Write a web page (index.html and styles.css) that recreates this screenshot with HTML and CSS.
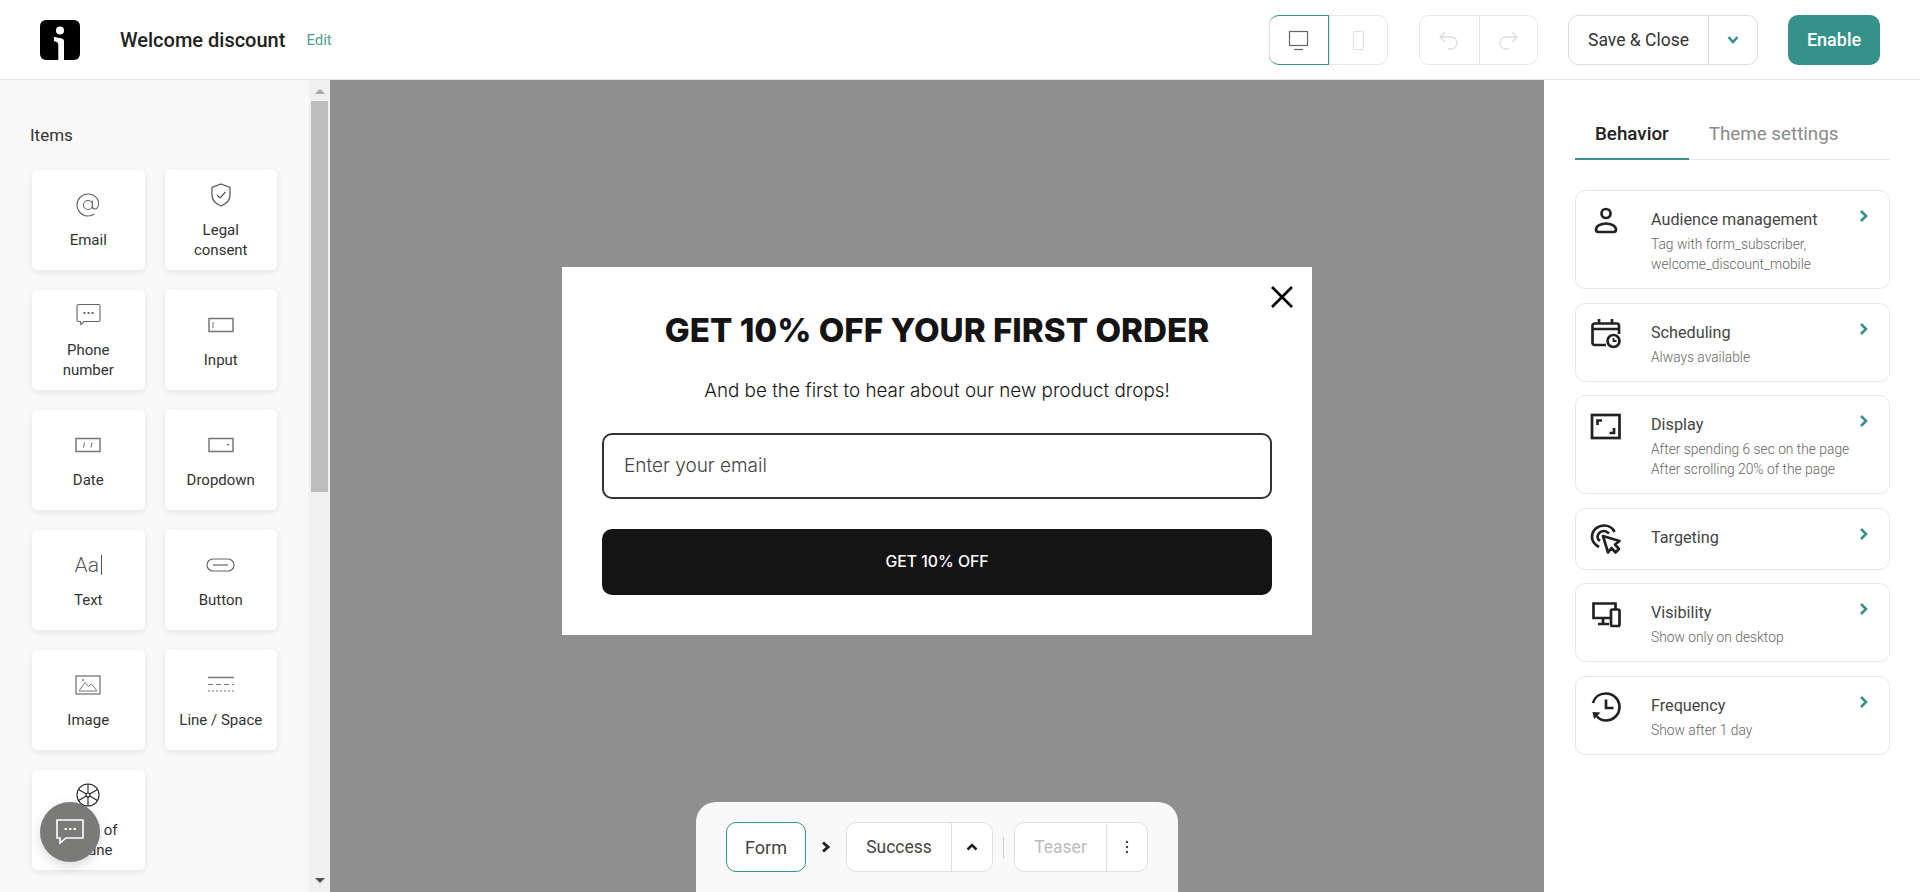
FILE: index.html
```html
<!DOCTYPE html>
<html>
    <head>
        <meta charset="utf-8">
        <title>Welcome discount</title>
        <link rel="stylesheet" href="styles.css">
    </head>
    <body>
        <header class="topbar">
            <svg class="logo" width="40" height="40" viewBox="0 0 40 40">
                <rect width="40" height="40" rx="6" fill="#000"/>
                <circle cx="20" cy="10.5" r="4" fill="#fff"/>
                <path d="M14 17C19 18 24 18 24 21V40H18.3V25C18.3 22.5 16.5 21.5 14 21.3Z" fill="#fff"/>
            </svg>
            <div class="form-title">Welcome discount</div>
            <a class="edit-link">Edit</a>
            <div class="topbar-actions">
                <div class="btn-group btn-group-device">
                    <div class="btn-cell btn-cell-active">
                        <svg width="24" height="24" viewBox="0 0 24 24" fill="none" stroke="#666" stroke-width="1.2"><rect x="3.5" y="3.5" width="18" height="14"/><path d="M8 21.5H17"/></svg>
                    </div>
                    <div class="btn-cell">
                        <svg width="24" height="24" viewBox="0 0 24 24" fill="none" stroke="#e2e2e2" stroke-width="1.2"><rect x="7.5" y="3.5" width="10" height="18" rx="1"/></svg>
                    </div>
                </div>
                <div class="btn-group btn-group-history">
                    <div class="btn-cell">
                        <svg width="24" height="24" viewBox="0 0 24 24" fill="none" stroke="#ddd" stroke-width="1.3"><path d="M8 4L3 9L8 14M3 9H14C18 9 20 12 20 15C20 18 18 21 14 21H11"/></svg>
                    </div>
                    <div class="btn-cell">
                        <svg width="24" height="24" viewBox="0 0 24 24" fill="none" stroke="#ddd" stroke-width="1.3"><path d="M16 4L21 9L16 14M21 9H10C6 9 4 12 4 15C4 18 6 21 10 21H13"/></svg>
                    </div>
                </div>
                <div class="btn-group btn-group-save">
                    <div class="btn-cell btn-cell-save">Save &amp; Close</div>
                    <div class="btn-cell btn-cell-caret">
                        <svg width="12" height="10" viewBox="0 0 12 10" fill="none" stroke="#35918a" stroke-width="2.6"><path d="M1.5 2L6 7L10.5 2"/></svg>
                    </div>
                </div>
                <div class="btn-enable">Enable</div>
            </div>
        </header>

        <div class="workspace">
            <aside class="sidebar">
                <div class="sidebar-content">
                    <div class="sidebar-title">Items</div>
                    <div class="items-grid">
                        <div class="item">
                            <svg width="30" height="30" viewBox="0 0 30 30" fill="none" stroke="#666" stroke-width="1.1"><circle cx="15" cy="15" r="4.5"/><path d="M19.5 10.5V17C19.5 19.5 23.5 20 25 16.5C27 11 23 4 15 4C9 4 4 9 4 15C4 21 9 26 15 26C18 26 20 25 21.5 24"/></svg>
                            <div class="item-label">Email</div>
                        </div>
                        <div class="item">
                            <svg width="30" height="30" viewBox="0 0 30 30" fill="none" stroke="#555" stroke-width="1.2"><path d="M15 4L24 7.5V15C24 20 20 24 15 26C10 24 6 20 6 15V7.5Z"/><path d="M11 15L14 18L19.5 12"/></svg>
                            <div class="item-label">Legal<br>consent</div>
                        </div>
                        <div class="item">
                            <svg width="30" height="30" viewBox="0 0 30 30" fill="none" stroke="#666" stroke-width="1.1"><path d="M5.5 4.5H25.5C26.5 4.5 27 5 27 6V20C27 21 26.500 21.500 25.500 21.500H11L8 24.500L7.500 21.500H5.500C4.500 21.500 4 21 4 20V6C4 5 4.500 4.500 5.500 4.500Z"/><path d="M10.500 13H12.500M14.500 13H16.500M18.500 13H20.500" stroke-width="1.800"/></svg>
                            <div class="item-label">Phone<br>number</div>
                        </div>
                        <div class="item">
                            <svg width="30" height="30" viewBox="0 0 30 30" fill="none" stroke="#777" stroke-width="1.500"><rect x="3" y="8.500" width="24" height="13"/><path d="M7 12V18" stroke-width="1"/></svg>
                            <div class="item-label">Input</div>
                        </div>
                        <div class="item">
                            <svg width="30" height="30" viewBox="0 0 30 30" fill="none" stroke="#777" stroke-width="1.500"><rect x="3" y="8.500" width="24" height="13"/><path d="M11.500 12.500L10.500 17.500M19 12.500L18 17.500" stroke-width="1.100"/></svg>
                            <div class="item-label">Date</div>
                        </div>
                        <div class="item">
                            <svg width="30" height="30" viewBox="0 0 30 30" fill="none" stroke="#777" stroke-width="1.500"><rect x="3" y="8.500" width="24" height="13"/><path d="M20.500 14H23.500L22 16Z" fill="#777" stroke="none"/></svg>
                            <div class="item-label">Dropdown</div>
                        </div>
                        <div class="item">
                            <div class="item-text-icon">Aa<span class="item-text-caret"></span></div>
                            <div class="item-label">Text</div>
                        </div>
                        <div class="item">
                            <svg width="30" height="30" viewBox="0 0 30 30" fill="none" stroke="#666" stroke-width="1.200"><rect x="1" y="9" width="27" height="12" rx="6"/><path d="M7 15H22"/></svg>
                            <div class="item-label">Button</div>
                        </div>
                        <div class="item">
                            <svg width="30" height="30" viewBox="0 0 30 30" fill="none" stroke="#777" stroke-width="1.300"><rect x="3" y="6" width="24" height="18"/><path d="M6 21L12 12.500L15.500 16.500L18.500 14L24 21Z" stroke-width="1"/><circle cx="10" cy="10" r="1" fill="#777" stroke="none"/></svg>
                            <div class="item-label">Image</div>
                        </div>
                        <div class="item">
                            <svg width="30" height="30" viewBox="0 0 30 30" fill="none" stroke="#777"><path d="M2 7.500H28" stroke-width="1.500"/><path d="M2 14.500H28" stroke-width="1" stroke-dasharray="5 3"/><path d="M2 21H28" stroke-width="1" stroke-dasharray="2 2"/></svg>
                            <div class="item-label">Line / Space</div>
                        </div>
                        <div class="item">
                            <svg width="30" height="30" viewBox="0 0 30 30" fill="none" stroke="#222" stroke-width="1.100"><circle cx="15" cy="15" r="11"/><circle cx="15" cy="15" r="2"/><path d="M15 4V13M15 17V26M5.500 9.500L13.300 14M16.700 16L24.500 20.500M24.500 9.500L16.700 14M13.300 16L5.500 20.500"/></svg>
                            <div class="item-label">Wheel of<br>fortune</div>
                        </div>
                    </div>
                </div>
                <div class="scrollbar">
                    <div class="scroll-arrow-up"></div>
                    <div class="scroll-thumb"></div>
                    <div class="scroll-arrow-down"></div>
                </div>
            </aside>

            <main class="canvas">
                <div class="popup">
                    <svg class="popup-close" width="22" height="22" viewBox="0 0 22 22" fill="none" stroke="#000" stroke-width="2.600"><path d="M1 1L21 21M21 1L1 21"/></svg>
                    <h1 class="popup-title">GET 10% OFF YOUR FIRST ORDER</h1>
                    <p class="popup-text">And be the first to hear about our new product drops!</p>
                    <div class="popup-input">Enter your email</div>
                    <div class="popup-button">GET 10% OFF</div>
                </div>
                <div class="steps">
                    <div class="step-btn step-btn-active">Form</div>
                    <svg class="step-arrow" width="10" height="12" viewBox="0 0 10 12" fill="none" stroke="#222" stroke-width="3"><path d="M2 1.500L7 6L2 10.500"/></svg>
                    <div class="step-group">
                        <div class="step-name step-name-success">Success</div>
                        <div class="step-side">
                            <svg width="12" height="10" viewBox="0 0 12 10" fill="none" stroke="#222" stroke-width="2.600"><path d="M1.500 7.500L6 3L10.500 7.500"/></svg>
                        </div>
                    </div>
                    <div class="step-divider"></div>
                    <div class="step-group">
                        <div class="step-name step-name-teaser">Teaser</div>
                        <div class="step-side">
                            <svg width="4" height="14" viewBox="0 0 4 14" fill="#444"><circle cx="2" cy="2" r="1.200"/><circle cx="2" cy="7" r="1.200"/><circle cx="2" cy="12" r="1.200"/></svg>
                        </div>
                    </div>
                </div>
            </main>

            <aside class="settings">
                <div class="tabs">
                    <div class="tab tab-active">Behavior</div>
                    <div class="tab">Theme settings</div>
                </div>
                <div class="setting-list">
                    <div class="setting">
                        <svg class="setting-icon" width="32" height="32" viewBox="0 0 32 32" fill="none" stroke="#222" stroke-width="2.700"><circle cx="16" cy="8.500" r="4.500"/><path d="M8.500 27H23.500C25 27 26 26 26 24.500C26 21 21 18.500 16 18.500C11 18.500 6 21 6 24.500C6 26 7 27 8.500 27Z"/></svg>
                        <div class="setting-body">
                            <div class="setting-name">Audience management</div>
                            <div class="setting-desc">Tag with form_subscriber,<br>welcome_discount_mobile</div>
                        </div>
                        <svg class="setting-chevron" width="10" height="14" viewBox="0 0 10 14" fill="none" stroke="#35918a" stroke-width="2.600"><path d="M2 2L7 7L2 12"/></svg>
                    </div>
                    <div class="setting">
                        <svg class="setting-icon" width="32" height="32" viewBox="0 0 32 32" fill="none" stroke="#222" stroke-width="2.700"><path d="M16 27H4.500C3.500 27 2.500 26 2.500 25V7.500C2.500 6.500 3.500 5.500 4.500 5.500H27C28 5.500 29 6.500 29 7.500V16"/><path d="M2.500 11H29M9 1V6M22 1V6"/><circle cx="23.500" cy="23" r="6"/><path d="M23.500 20V23H26.500" stroke-width="1.800"/></svg>
                        <div class="setting-body">
                            <div class="setting-name">Scheduling</div>
                            <div class="setting-desc">Always available</div>
                        </div>
                        <svg class="setting-chevron" width="10" height="14" viewBox="0 0 10 14" fill="none" stroke="#35918a" stroke-width="2.600"><path d="M2 2L7 7L2 12"/></svg>
                    </div>
                    <div class="setting">
                        <svg class="setting-icon" width="32" height="32" viewBox="0 0 32 32" fill="none" stroke="#222" stroke-width="2.700"><rect x="2" y="5" width="27.500" height="23"/><path d="M7.500 15V10.500H12M24 18V23H19.500"/></svg>
                        <div class="setting-body">
                            <div class="setting-name">Display</div>
                            <div class="setting-desc">After spending 6 sec on the page<br>After scrolling 20% of the page</div>
                        </div>
                        <svg class="setting-chevron" width="10" height="14" viewBox="0 0 10 14" fill="none" stroke="#35918a" stroke-width="2.600"><path d="M2 2L7 7L2 12"/></svg>
                    </div>
                    <div class="setting setting-single">
                        <svg class="setting-icon" width="32" height="32" viewBox="0 0 32 32" fill="none" stroke="#222" stroke-width="2.700"><path d="M9 24C4.500 21.500 2 17.500 2 14C2 7.500 7.500 2.500 14 2.500C19 2.500 23 5.500 24.500 9"/><path d="M10 18C8 16.500 7.500 15 7.500 14C7.500 10.500 10.500 8 14 8C16 8 17.500 9 19 10.500"/><path d="M13 13L29.500 18L25 21.500L29 26L25.500 29.500L21.500 25L18 29.500Z" stroke-linejoin="round"/></svg>
                        <div class="setting-body">
                            <div class="setting-name">Targeting</div>
                        </div>
                        <svg class="setting-chevron" width="10" height="14" viewBox="0 0 10 14" fill="none" stroke="#35918a" stroke-width="2.600"><path d="M2 2L7 7L2 12"/></svg>
                    </div>
                    <div class="setting">
                        <svg class="setting-icon" width="32" height="32" viewBox="0 0 32 32" fill="none" stroke="#222" stroke-width="2.700"><path d="M20 20H3.500V5.500H25.500V11"/><path d="M13 20V26M8 26H19"/><rect x="21" y="11.500" width="8.500" height="16.500" rx="1.500"/></svg>
                        <div class="setting-body">
                            <div class="setting-name">Visibility</div>
                            <div class="setting-desc">Show only on desktop</div>
                        </div>
                        <svg class="setting-chevron" width="10" height="14" viewBox="0 0 10 14" fill="none" stroke="#35918a" stroke-width="2.600"><path d="M2 2L7 7L2 12"/></svg>
                    </div>
                    <div class="setting">
                        <svg class="setting-icon" width="32" height="32" viewBox="0 0 32 32" fill="none" stroke="#222" stroke-width="2.700"><path d="M3 12C4.500 6 9.500 2.500 16 2.500C23.500 2.500 29.500 8.500 29.500 16C29.500 23.500 23.500 29.500 16 29.500C12 29.500 9 28 6.500 25"/><path d="M16 8.500V17H23.500"/><path d="M2.500 21L10.500 21.500L4 28Z" fill="#222" stroke="none"/></svg>
                        <div class="setting-body">
                            <div class="setting-name">Frequency</div>
                            <div class="setting-desc">Show after 1 day</div>
                        </div>
                        <svg class="setting-chevron" width="10" height="14" viewBox="0 0 10 14" fill="none" stroke="#35918a" stroke-width="2.600"><path d="M2 2L7 7L2 12"/></svg>
                    </div>
                </div>
            </aside>
        </div>

        <div class="chat-bubble">
            <svg width="30" height="28" viewBox="0 0 30 28" fill="none" stroke="#fff" stroke-width="1.600"><path d="M2 2H28V20H11L5 25V20H2Z"/><path d="M9.500 11H12M14 11H16.500M18.500 11H21" stroke-width="2"/></svg>
        </div>
    </body>
</html>
```

FILE: styles.css
```css
/* Overall */

* {
    box-sizing: border-box;
}

html, body {
    padding: 0;
    margin: 0;
    height: 100%;
    overflow: hidden;
}

body {
    font-family: Roboto, 'Liberation Sans', sans-serif;
    font-size: 14px;
    color: #333;
    background: #fff;
}

/* Top bar */

.topbar {
    display: flex;
    align-items: center;
    height: 80px;
    padding: 0 40px;
    border-bottom: 1px solid #e6e6e6;
}

.logo {
    margin-right: 40px;
}

.form-title {
    font-size: 20px;
    font-weight: 500;
    color: #222;
}

.edit-link {
    margin-left: 21px;
    font-size: 15px;
    color: #4f9f97;
}

.topbar-actions {
    display: flex;
    margin-left: auto;
}

.btn-group {
    display: flex;
    height: 50px;
    margin-right: 30px;
    border: 1px solid #e8e8e8;
    border-radius: 10px;
    background: #fff;
}

.btn-group-device {
    margin-right: 31px;
}

.btn-group-save {
    border-color: #dcdcdc;
}

.btn-cell {
    display: flex;
    align-items: center;
    justify-content: center;
    width: 58.5px;
    border-left: 1px solid #e8e8e8;
}

.btn-cell:first-child {
    border-left: none;
}

.btn-cell-active {
    width: 59.5px;
    margin: -1px 0 -1px -1px;
    border: 1px solid #35918a;
    border-radius: 10px 0 0 10px;
}

.btn-cell-save {
    width: 139px;
    font-size: 17.5px;
    color: #333;
}

.btn-cell-caret {
    width: 49px;
    border-left-color: #dcdcdc;
}

.btn-enable {
    display: flex;
    align-items: center;
    justify-content: center;
    width: 92px;
    height: 50px;
    border-radius: 10px;
    background: #35918a;
    color: #fff;
    font-size: 18px;
    font-weight: 500;
}

/* Layout */

.workspace {
    display: flex;
    height: 812px;
}

/* Sidebar */

.sidebar {
    display: flex;
    flex: none;
    width: 330px;
    height: 812px;
    background: #f9f9f9;
}

.sidebar-content {
    flex: 1;
    padding: 45px 32px 0;
    overflow: hidden;
}

.sidebar-title {
    margin: 0 0 25px -2px;
    font-size: 17px;
    line-height: 20px;
    color: #333;
}

.items-grid {
    display: grid;
    grid-template-columns: 1fr 1fr;
    grid-auto-rows: 100px;
    gap: 20px;
}

.item {
    display: flex;
    flex-direction: column;
    align-items: center;
    justify-content: center;
    border-radius: 5px;
    background: #fff;
    box-shadow: 0 2px 6px rgba(0, 0, 0, 0.09);
}

.item-label {
    margin-top: 10px;
    text-align: center;
    font-size: 15px;
    line-height: 20px;
    color: #333;
}

.item-text-icon {
    display: flex;
    align-items: center;
    justify-content: center;
    height: 30px;
    font-size: 21px;
    font-weight: 300;
    color: #555;
}

.item-text-caret {
    width: 1px;
    height: 20px;
    margin-left: 2px;
    background: #555;
}

/* Fake scrollbar, same look as the native one on the reference */

.scrollbar {
    display: flex;
    flex: none;
    flex-direction: column;
    align-items: center;
    width: 21px;
    background: #f0f0f0;
}

.scroll-arrow-up {
    margin-top: 9px;
    border-left: 5px solid transparent;
    border-right: 5px solid transparent;
    border-bottom: 5px solid #a8a8a8;
}

.scroll-thumb {
    width: 17px;
    height: 391px;
    margin-top: 7px;
    background: #bdbdbd;
}

.scroll-arrow-down {
    margin-top: auto;
    margin-bottom: 9px;
    border-left: 5px solid transparent;
    border-right: 5px solid transparent;
    border-top: 5px solid #505050;
}

/* Canvas */

.canvas {
    display: flex;
    flex: 1;
    flex-direction: column;
    align-items: center;
    padding-top: 187px;
    background: #8f8f8f;
}

.popup {
    position: relative;
    width: 750px;
    height: 368px;
    padding: 0 40px;
    background: #fff;
    font-family: Inter, 'Liberation Sans', sans-serif;
    color: #141414;
}

.popup-close {
    position: absolute;
    top: 19px;
    right: 19px;
}

.popup-title {
    margin: 0;
    padding-top: 41px;
    text-align: center;
    font-size: 33.2px;
    font-weight: 800;
    line-height: 44px;
}

.popup-text {
    margin: 25px 0 0;
    text-align: center;
    font-size: 18.85px;
    font-weight: 300;
    line-height: 28px;
}

.popup-input {
    display: flex;
    align-items: center;
    height: 66px;
    margin-top: 28px;
    padding: 0 0 2px 20px;
    border: 2px solid #333;
    border-radius: 10px;
    font-size: 19px;
    font-weight: 300;
    color: #444;
}

.popup-button {
    display: flex;
    align-items: center;
    justify-content: center;
    height: 66px;
    margin-top: 30px;
    padding-bottom: 2px;
    border-radius: 10px;
    background: #141414;
    color: #fff;
    font-size: 15.8px;
    font-weight: 500;
}

/* Steps panel */

.steps {
    display: flex;
    align-items: center;
    width: 482px;
    height: 90px;
    margin-top: auto;
    padding: 20px 30px;
    border-radius: 20px 20px 0 0;
    background: #f9f9f9;
}

.step-btn {
    display: flex;
    align-items: center;
    justify-content: center;
    width: 80px;
    height: 50px;
    border: 1px solid #35918a;
    border-radius: 10px;
    background: #fff;
    font-size: 18px;
    color: #444;
}

.step-arrow {
    margin: 0 15px;
}

.step-group {
    display: flex;
    height: 50px;
    border: 1px solid #dfdfdf;
    border-radius: 10px;
    background: #fff;
    font-size: 17.5px;
}

.step-name {
    display: flex;
    align-items: center;
    justify-content: center;
}

.step-name-success {
    width: 104px;
    color: #444;
}

.step-name-teaser {
    width: 91px;
    color: #bbb;
}

.step-side {
    display: flex;
    align-items: center;
    justify-content: center;
    width: 41px;
    border-left: 1px solid #dfdfdf;
}

.step-divider {
    width: 1px;
    height: 21px;
    margin: 0 10px;
    background: #ccc;
}

/* Settings panel */

.settings {
    flex: none;
    width: 376px;
    padding: 30px 30px 0 31px;
}

.tabs {
    display: flex;
    height: 50px;
    border-bottom: 1px solid #e6e6e6;
}

.tab {
    display: flex;
    align-items: center;
    height: 50px;
    padding: 0 20px;
    border-bottom: 2px solid transparent;
    font-size: 18.8px;
    color: #8a8a8a;
}

.tab-active {
    border-bottom-color: #35918a;
    font-weight: 500;
    color: #222;
}

.setting-list {
    display: flex;
    flex-direction: column;
    gap: 13.5px;
    margin-top: 30px;
    width: 315px;
}

.setting {
    display: flex;
    align-items: flex-start;
    padding: 19px 20px 14px 14px;
    border: 1px solid #e8e8e8;
    border-radius: 10px;
}

.setting-single {
    min-height: 61px;
}

.setting-icon {
    flex: none;
    margin: -5px 29px 0 0;
}

.setting-body {
    flex: 1;
}

.setting-name {
    font-size: 16.2px;
    line-height: 20px;
    color: #444;
}

.setting-desc {
    margin-top: 4px;
    font-size: 13.8px;
    font-weight: 300;
    line-height: 20px;
    color: #666;
}

.setting-chevron {
    flex: none;
    margin-top: -1px;
}

/* Chat bubble */

.chat-bubble {
    position: absolute;
    left: 40px;
    top: 802px;
    display: flex;
    align-items: center;
    justify-content: center;
    width: 60px;
    height: 60px;
    border-radius: 50%;
    background: #7a7a78;
    box-shadow: 0 4px 12px rgba(0, 0, 0, 0.15);
}
```
